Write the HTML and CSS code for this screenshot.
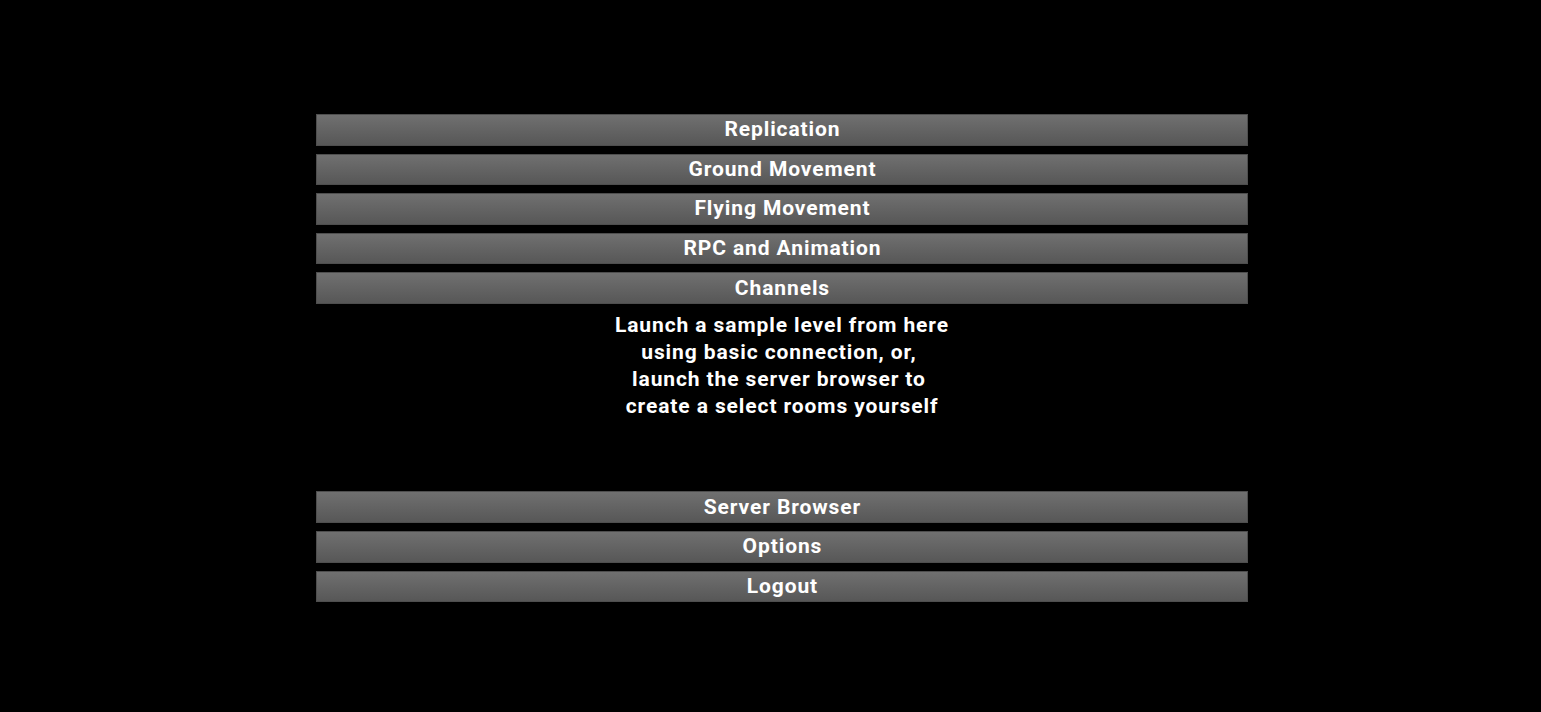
FILE: index.html
```html
<!DOCTYPE html>
<html>
<head>
<meta charset="utf-8">
<link rel="stylesheet" href="styles.css">
</head>
<body>
<div class="menu">
  <div class="group">
    <div class="btn">Replication</div>
    <div class="btn">Ground Movement</div>
    <div class="btn">Flying Movement</div>
    <div class="btn">RPC and Animation</div>
    <div class="btn">Channels</div>
  </div>
  <div class="info">Launch a sample level from here
using basic connection, or, 
launch the server browser to 
create a select rooms yourself</div>
  <div class="group bottom">
    <div class="btn">Server Browser</div>
    <div class="btn">Options</div>
    <div class="btn">Logout</div>
  </div>
</div>
</body>
</html>
```
FILE: styles.css
```css
html, body {
  margin: 0;
  padding: 0;
  background: #000;
  height: 100%;
}
body {
  font-family: Roboto, "Liberation Sans", sans-serif;
  color: #fff;
}
.menu {
  width: 932px;
  margin-left: 316px;
  padding-top: 114px;
  display: flex;
  flex-direction: column;
}
.group {
  display: flex;
  flex-direction: column;
  gap: 8px;
}
.btn {
  height: 31.6px;
  box-sizing: border-box;
  border: 1px solid #4e4e4e;
  background: linear-gradient(#707070, #575757);
  display: flex;
  align-items: center;
  justify-content: center;
  font-weight: 700;
  font-size: 21px;
  letter-spacing: 0.9px;
  padding-left: 0.9px;
  padding-bottom: 1px;
}
.info {
  margin-top: 8.5px;
  text-align: center;
  font-weight: 700;
  font-size: 21px;
  line-height: 27px;
  letter-spacing: 0.9px;
  white-space: pre;
}
.bottom {
  margin-top: 71px;
}
```
